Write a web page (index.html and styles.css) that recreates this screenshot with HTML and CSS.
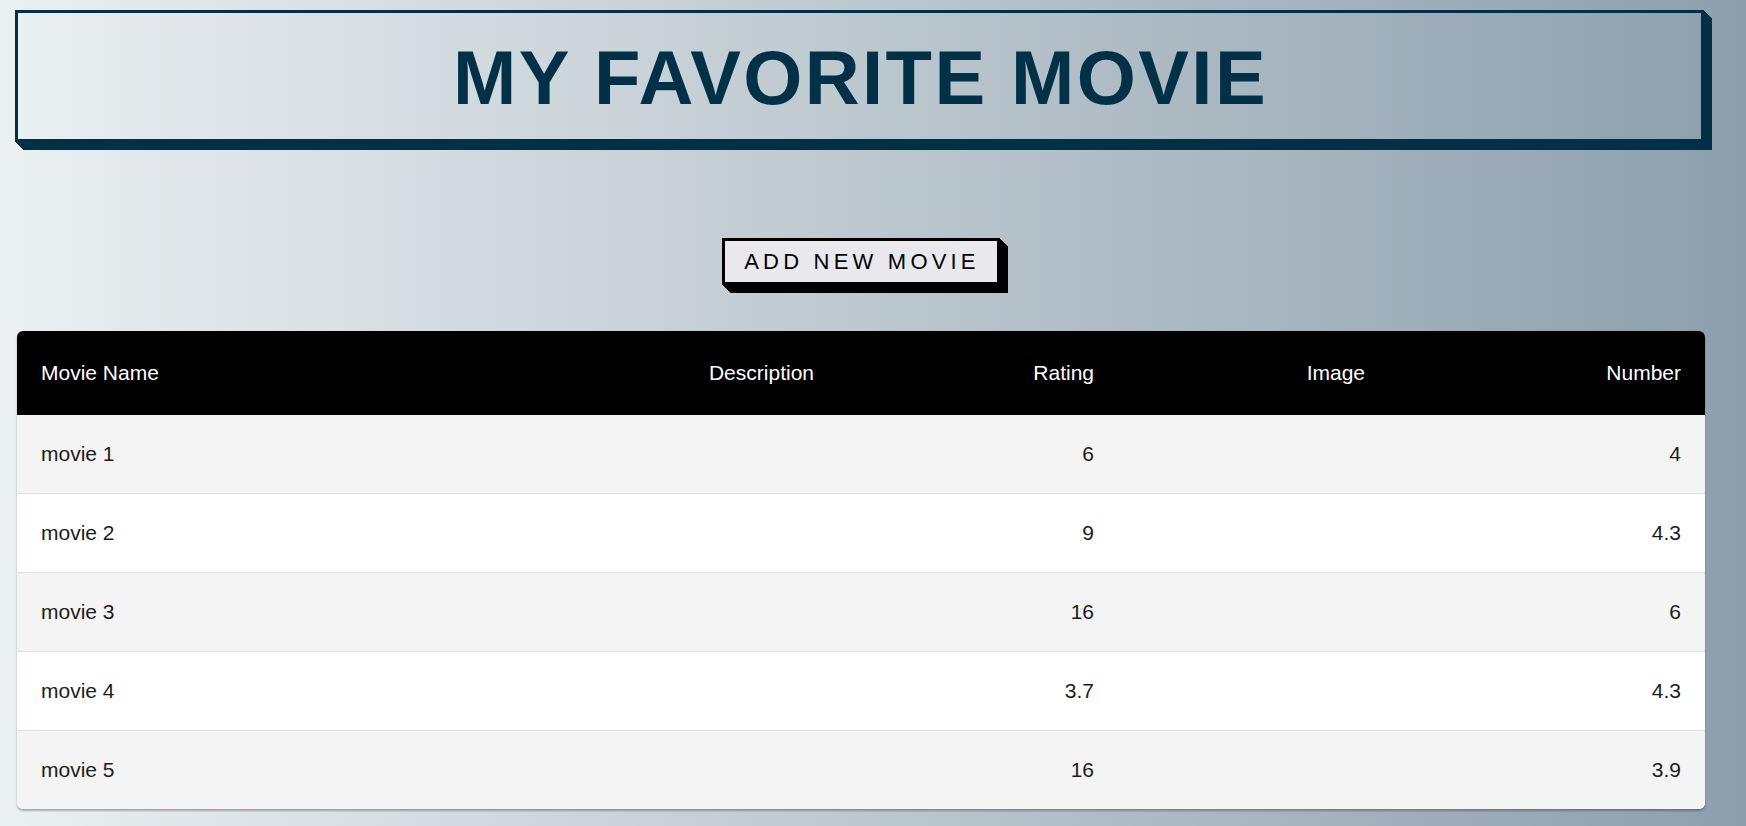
FILE: index.html
```html
<!DOCTYPE html>
<html lang="en">
<head>
<meta charset="utf-8">
<title>My Favorite Movie</title>
<link rel="stylesheet" href="styles.css">
</head>
<body>
<div class="page">
  <header class="banner">
    <h1 class="banner-title">MY FAVORITE MOVIE</h1>
  </header>
  <div class="actions">
    <button class="add-btn" type="button">Add New Movie</button>
  </div>
  <div class="table-card">
    <table class="movies">
      <colgroup>
        <col class="c-name">
        <col class="c-desc">
        <col class="c-rating">
        <col class="c-image">
        <col class="c-number">
      </colgroup>
      <thead>
        <tr>
          <th class="left">Movie Name</th>
          <th>Description</th>
          <th>Rating</th>
          <th>Image</th>
          <th>Number</th>
        </tr>
      </thead>
      <tbody>
        <tr><td class="left">movie 1</td><td></td><td>6</td><td></td><td>4</td></tr>
        <tr><td class="left">movie 2</td><td></td><td>9</td><td></td><td>4.3</td></tr>
        <tr><td class="left">movie 3</td><td></td><td>16</td><td></td><td>6</td></tr>
        <tr><td class="left">movie 4</td><td></td><td>3.7</td><td></td><td>4.3</td></tr>
        <tr><td class="left">movie 5</td><td></td><td>16</td><td></td><td>3.9</td></tr>
      </tbody>
    </table>
  </div>
</div>
</body>
</html>
```

FILE: styles.css
```css
html, body {
  margin: 0;
  padding: 0;
}

body {
  min-height: 826px;
  background: linear-gradient(to right, #ebf0f1 0%, #8d9fad 100%);
  font-family: "Liberation Sans", Arial, sans-serif;
  overflow: hidden;
}

.page {
  width: 1720px;
  padding-top: 10px;
}

.banner {
  box-sizing: border-box;
  width: 1689px;
  height: 132px;
  margin-left: 15px;
  border: 3px solid #023047;
  display: flex;
  align-items: center;
  justify-content: center;
  box-shadow:
    1px 1px 0 #023047, 2px 2px 0 #023047, 3px 3px 0 #023047, 4px 4px 0 #023047,
    5px 5px 0 #023047, 6px 6px 0 #023047, 7px 7px 0 #023047, 8px 8px 0 #023047;
}

.banner-title {
  margin: 0;
  padding-top: 2px;
  padding-left: 2px;
  font-size: 76px;
  font-weight: 700;
  letter-spacing: 2.4px;
  color: #023047;
  line-height: normal;
}

.actions {
  display: flex;
  justify-content: center;
  padding-left: 2px;
  margin-top: 96px;
}

.add-btn {
  box-sizing: border-box;
  height: 47px;
  padding: 0 17px 0 19px;
  background: #e9e9ed;
  border: 3px solid #000;
  border-radius: 0;
  font-family: "Liberation Sans", Arial, sans-serif;
  font-size: 22px;
  letter-spacing: 4.2px;
  text-transform: uppercase;
  color: #000;
  line-height: 1;
  box-shadow:
    1px 1px 0 #000, 2px 2px 0 #000, 3px 3px 0 #000, 4px 4px 0 #000,
    5px 5px 0 #000, 6px 6px 0 #000, 7px 7px 0 #000, 8px 8px 0 #000;
}

.table-card {
  width: 1688px;
  margin: 46px 0 0 17px;
  border-radius: 6px;
  overflow: hidden;
  background: #fff;
  box-shadow: 0 2px 2px rgba(0, 0, 0, 0.28), 0 0 1px rgba(0, 0, 0, 0.15);
}

.movies {
  width: 100%;
  border-collapse: collapse;
  table-layout: fixed;
  font-size: 21px;
}

.c-name { width: 583px; }
.c-desc { width: 238px; }
.c-rating { width: 280px; }
.c-image { width: 271px; }
.c-number { width: 316px; }

.movies th,
.movies td {
  padding: 0 24px;
  text-align: right;
  font-weight: 400;
}

.movies th.left,
.movies td.left {
  text-align: left;
  padding-left: 24px;
}

.movies thead tr {
  background: #000;
  height: 84px;
}

.movies th {
  color: #fff;
}

.movies tbody tr {
  height: 79px;
  border-top: 1px solid #e0e0e0;
}

.movies tbody tr:first-child {
  height: 78px;
  border-top: none;
}

.movies td {
  color: #1c1c1c;
}

.movies tbody tr:nth-child(odd) {
  background: #f4f4f4;
}

.movies tbody tr:nth-child(even) {
  background: #fff;
}
```
